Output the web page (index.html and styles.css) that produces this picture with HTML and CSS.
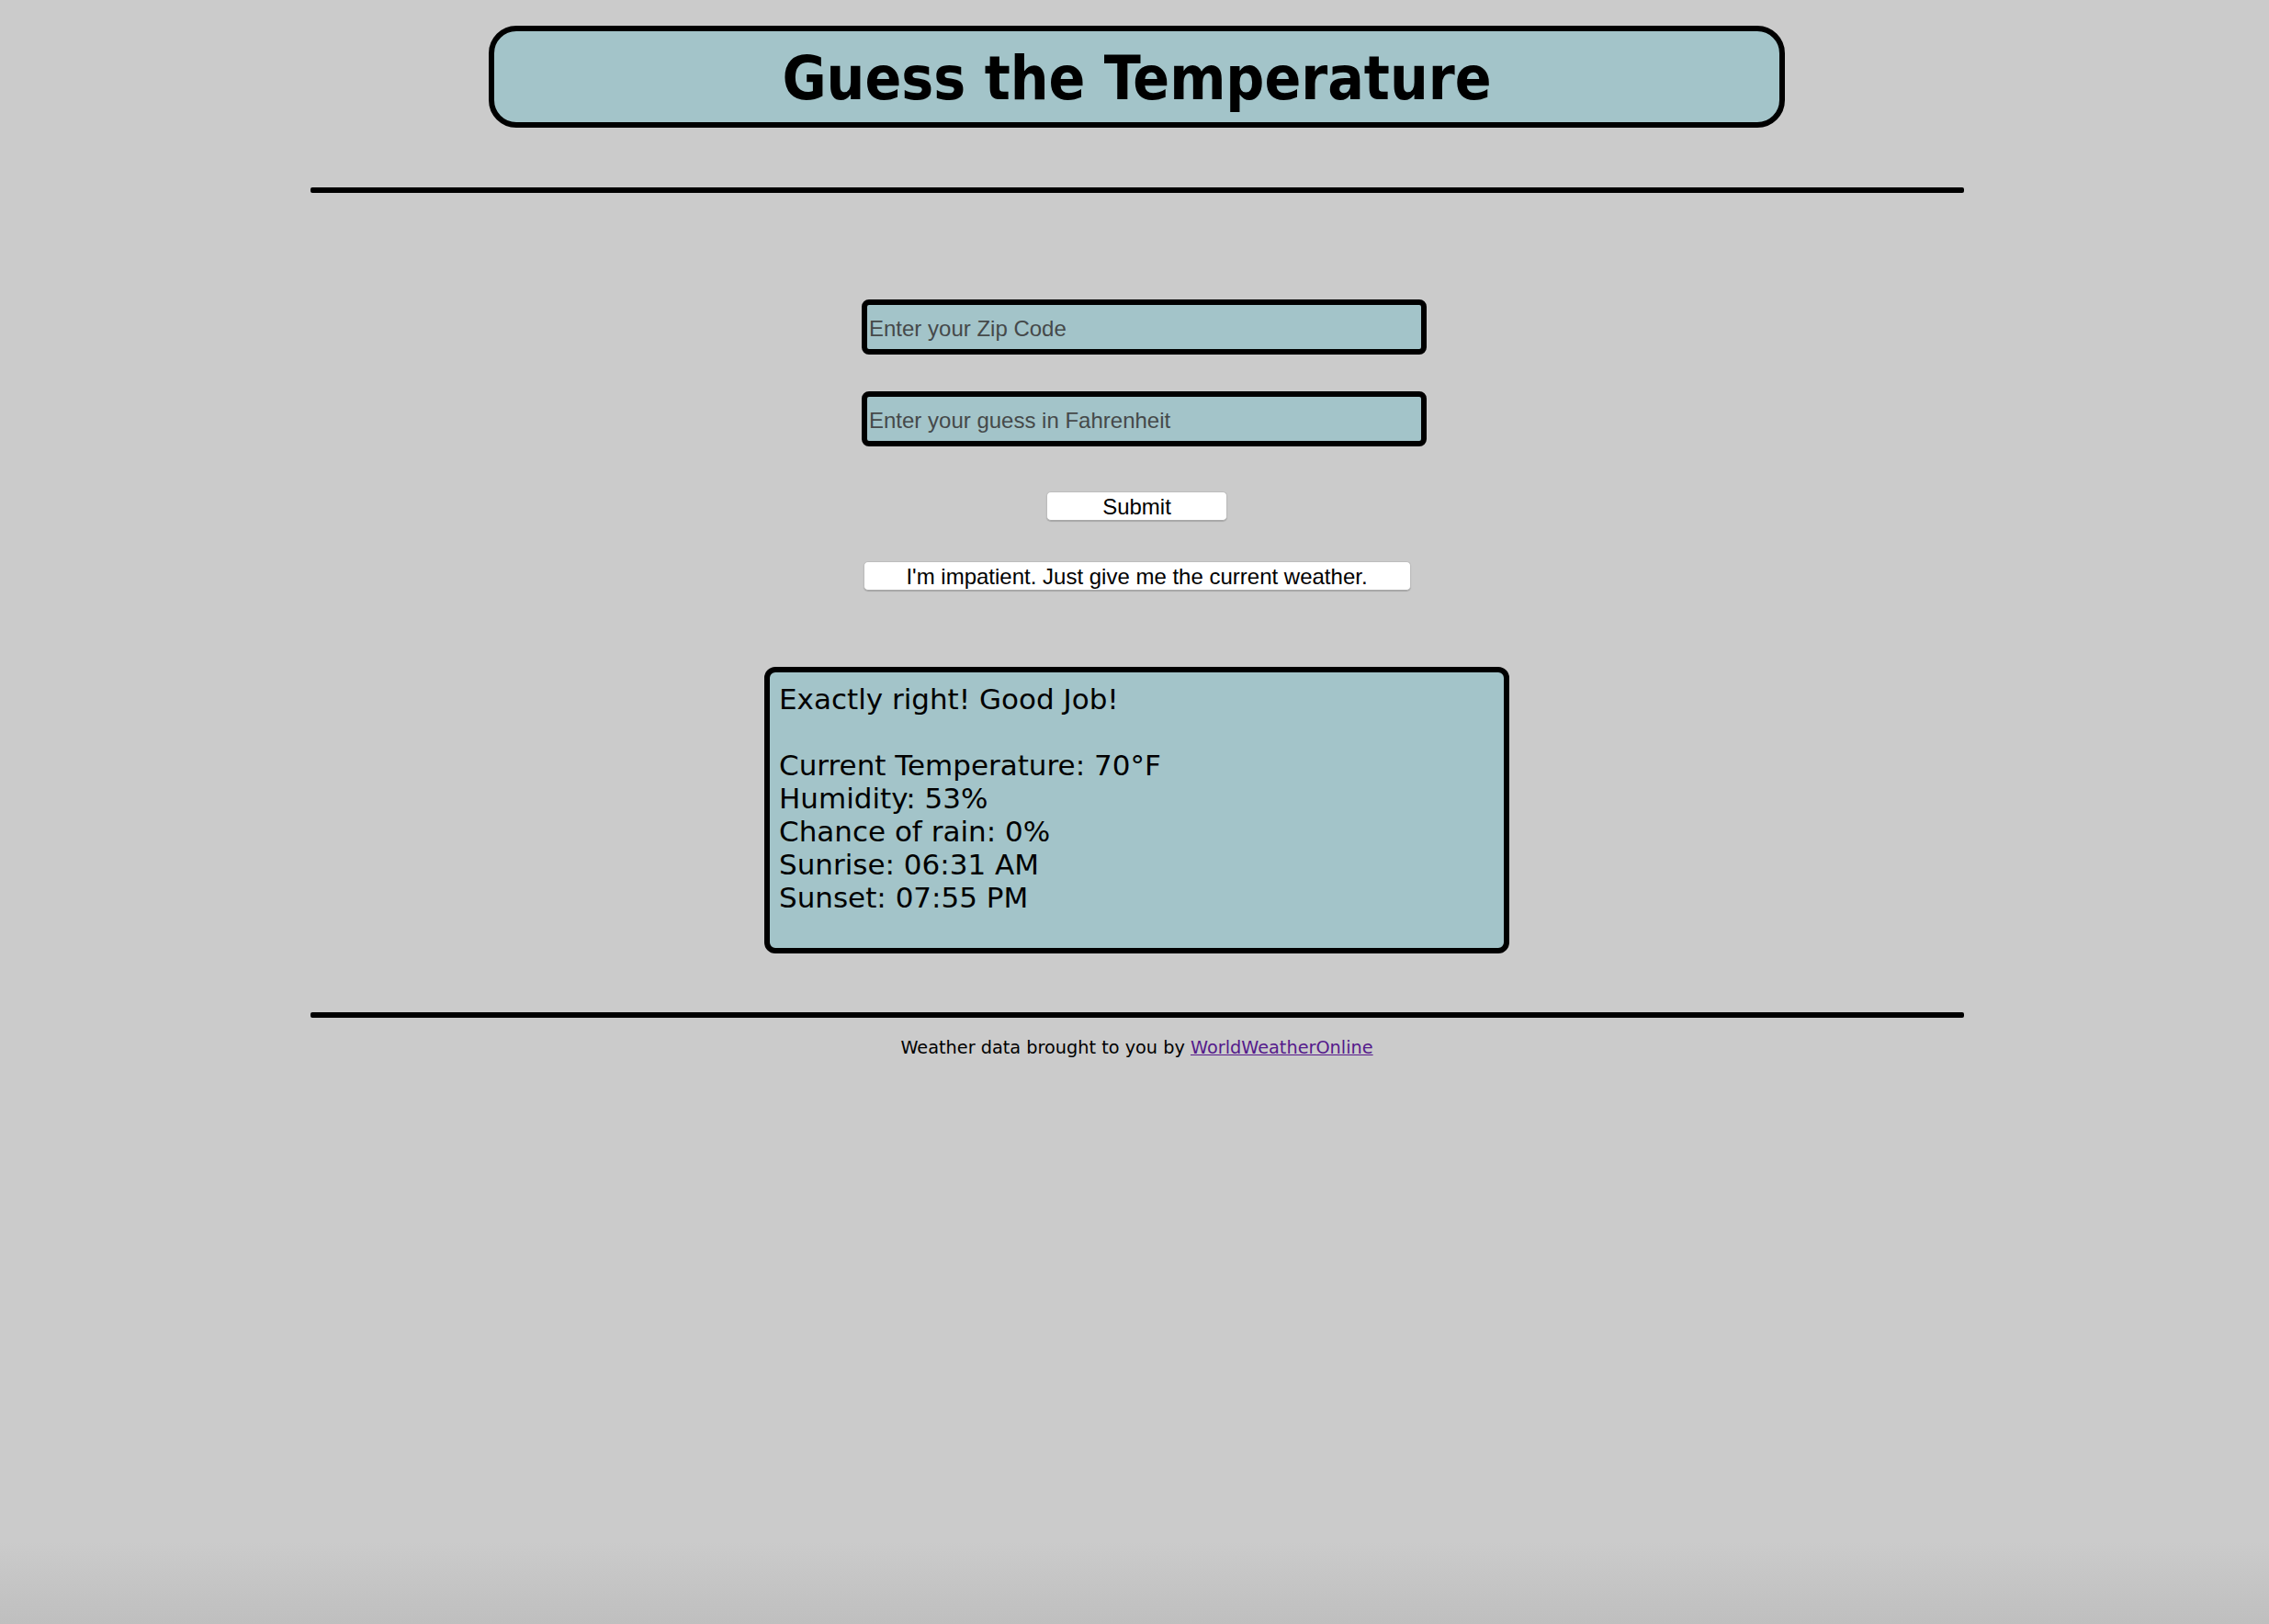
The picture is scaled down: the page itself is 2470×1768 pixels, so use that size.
FILE: index.html
```html
<!DOCTYPE html>
<html lang="en">
<head>
<meta charset="utf-8">
<title>Guess the Temperature</title>
<link rel="stylesheet" href="styles.css">
</head>
<body>
<div class="page">
  <header class="title-box">
    <h1 class="title">Guess the Temperature</h1>
  </header>
  <hr class="rule rule-top">
  <form class="form">
    <input class="field field-zip" type="text" placeholder="Enter your Zip Code">
    <input class="field field-guess" type="text" placeholder="Enter your guess in Fahrenheit">
    <button class="btn btn-submit" type="button">Submit</button>
    <button class="btn btn-wide" type="button">I'm impatient. Just give me the current weather.</button>
  </form>
  <div class="result">
    <div class="result-line">Exactly right! Good Job!</div>
    <div class="result-line result-blank">&nbsp;</div>
    <div class="result-line">Current Temperature: 70°F</div>
    <div class="result-line">Humidity: 53%</div>
    <div class="result-line">Chance of rain: 0%</div>
    <div class="result-line">Sunrise: 06:31 AM</div>
    <div class="result-line">Sunset: 07:55 PM</div>
  </div>
  <hr class="rule rule-bottom">
  <p class="credit">Weather data brought to you by <a class="credit-link" href="#">WorldWeatherOnline</a></p>
</div>
</body>
</html>
```
FILE: styles.css
```css
html {
  min-height: 100%;
  background: linear-gradient(to bottom, #cbcbcb 0, #cbcbcb calc(100% - 90px), #bfbfbf 100%);
}
body {
  margin: 0;
  min-height: 100vh;
  font-family: "DejaVu Sans", "Open Sans", sans-serif;
  color: #000;
}
.page {
  display: flex;
  flex-direction: column;
  align-items: center;
  padding: 28px 0 0 5px;
}
.title-box {
  box-sizing: border-box;
  width: 1411px;
  height: 111px;
  background: #a3c4c9;
  border: 6px solid #000;
  border-radius: 30px;
  padding-top: 13px;
}
.title {
  margin: 0;
  font-family: "DejaVu Sans Condensed", "DejaVu Sans", sans-serif;
  font-stretch: condensed;
  font-weight: bold;
  font-size: 65.3px;
  line-height: 77px;
  text-align: center;
}
.rule {
  box-sizing: border-box;
  width: 1800px;
  height: 6px;
  margin: 0;
  border: 0;
  border-radius: 2px;
  background: #000;
}
.rule-top {
  margin-top: 65px;
}
.form {
  display: flex;
  flex-direction: column;
  align-items: center;
  margin-top: 116px;
}
.field {
  box-sizing: border-box;
  width: 615px;
  height: 60px;
  margin: 0 0 0 16px;
  padding: 3px 0 0 2px;
  background: #a3c4c9;
  border: 6px solid #000;
  border-radius: 8px;
  font-family: "Liberation Sans", Arial, sans-serif;
  font-size: 24px;
  color: #000;
  outline: none;
}
.field::placeholder {
  color: #45494a;
}
.field-guess {
  margin-top: 40px;
}
.btn {
  box-sizing: border-box;
  height: 32px;
  padding: 2px 0 0;
  background: #fff;
  border: 1px solid #bdbdbd;
  border-bottom-color: #a8a8a8;
  border-radius: 5px;
  box-shadow: 0 1px 1px rgba(0, 0, 0, 0.18);
  font-family: "Liberation Sans", Arial, sans-serif;
  font-size: 24px;
  color: #000;
}
.btn-submit {
  width: 197px;
  margin-top: 49px;
}
.btn-wide {
  width: 596px;
  margin-top: 44px;
}
.result {
  box-sizing: border-box;
  width: 811px;
  height: 312px;
  margin-top: 83px;
  padding: 11px 10px 0;
  background: #a3c4c9;
  border: 6px solid #000;
  border-radius: 12px;
  font-family: "DejaVu Sans", sans-serif;
  font-size: 31px;
  line-height: 36px;
}
.rule-bottom {
  margin-top: 64px;
}
.credit {
  margin: 22px 0 0;
  font-family: "DejaVu Sans", sans-serif;
  font-size: 19.3px;
  line-height: 22px;
}
.credit-link {
  color: #551a8b;
}
```
